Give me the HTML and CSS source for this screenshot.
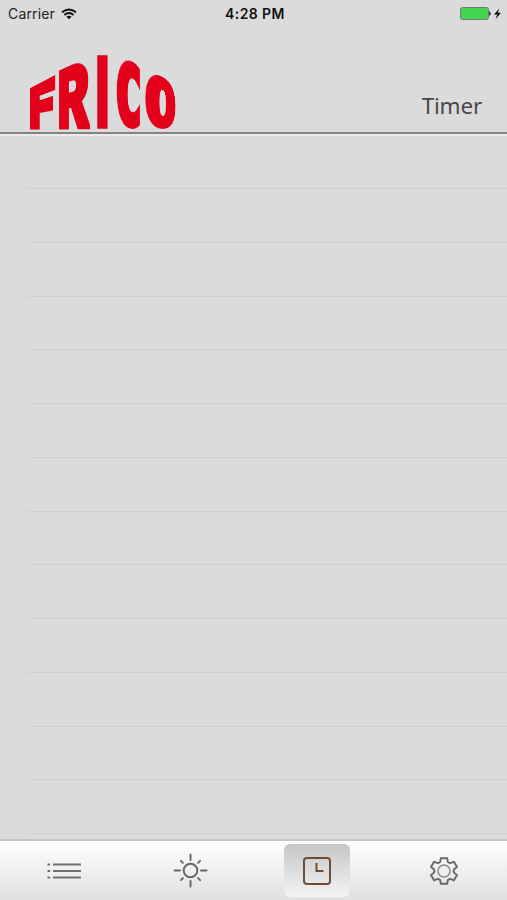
FILE: index.html
```html
<!DOCTYPE html>
<html lang="en">
<head>
  <meta charset="utf-8">
  <title>Timer</title>
  <link rel="stylesheet" href="styles.css">
</head>
<body>
  <div class="status">
    <div class="carrier">
      <span>Carrier</span>
      <svg width="16" height="12" viewBox="0 0 16 12" fill="none" stroke="#111" stroke-width="1.9">
        <path d="M1 4.3Q8-1.4 15 4.3M3.4 7Q8 3.2 12.6 7"/>
        <path d="M5.4 8.7Q8 6.7 10.6 8.7L8 11.3z" fill="#111" stroke="none"/>
      </svg>
    </div>
    <div class="clock">4:28 PM</div>
    <div class="power">
      <svg width="42" height="14" viewBox="0 0 42 14">
        <rect x=".5" y=".5" width="28" height="12" rx="2" fill="#43d651" stroke="#777"/>
        <path d="M29.5 4.5q2 2 0 4z" fill="#222" stroke="#222" stroke-width=".6"/>
        <path d="M39.3 1.5L34 7.5h3.2L35.7 12 41 5.8h-3.2z" fill="#111"/>
      </svg>
    </div>
  </div>

  <header class="header">
    <div class="logo">
      <span class="letter f">F</span>
      <span class="letter r">R</span>
      <span class="letter i">I</span>
      <span class="letter c">C</span>
      <span class="letter o">O</span>
    </div>
    <h1 class="title">Timer</h1>
  </header>

  <main class="list">
    <div class="row first"></div>
    <div class="row"></div>
    <div class="row"></div>
    <div class="row"></div>
    <div class="row"></div>
    <div class="row"></div>
    <div class="row"></div>
    <div class="row"></div>
    <div class="row"></div>
    <div class="row"></div>
    <div class="row"></div>
    <div class="row"></div>
    <div class="row"></div>
  </main>

  <nav class="tabs">
    <a class="tab">
      <svg width="36" height="20" viewBox="0 0 36 20" stroke="#707070" stroke-width="2">
        <path d="M2.5 3.5h2.6M2.5 10h2.6M2.5 16.5h2.6M8 3.5h28M8 10h28M8 16.5h28"/>
      </svg>
    </a>
    <a class="tab">
      <svg width="36" height="36" viewBox="-18.5 -17.5 36 36" fill="none" stroke="#686868" stroke-width="2" stroke-linecap="round">
        <circle r="6.8"/>
        <path d="M0-10.5V-16M0 10.5V16M-10.5 0H-16M10.5 0H16M7.6-7.6l2-2M-7.6-7.6l-2-2M7.6 7.6l2 2M-7.6 7.6l-2 2"/>
      </svg>
    </a>
    <a class="tab active">
      <svg width="28" height="28" viewBox="0 0 28 28" fill="none" stroke="#704c35" stroke-width="2">
        <rect x="1" y="1" width="26" height="26" rx="3"/>
        <path d="M13.5 6V14h7"/>
      </svg>
    </a>
    <a class="tab">
      <svg width="30" height="30" viewBox="-15 -15 30 30" fill="none" stroke="#686868" stroke-width="1.9" stroke-linejoin="round">
        <path d="M-3.2-12.8h6.4l.5 3.5q1.4 1.9 3.4 1.1l2.9-1.1 3 5.3-2.6 2q-1.7 2 0 4l2.6 2-3 5.300-2.900-1.100q-2-.8-3.400 1.100l-.5 3.500h-6.400l-.5-3.500q-1.400-1.900-3.400-1.100l-2.900 1.100-3-5.300 2.600-2q1.700-2 0-4l-2.600-2 3-5.300 2.900 1.100q2 .8 3.400-1.100z"/>
        <circle r="6" stroke="#888" stroke-width="1.5"/>
      </svg>
    </a>
  </nav>
</body>
</html>
```

FILE: styles.css
```css
* {
  box-sizing: border-box;
}

body {
  margin: 0;
  height: 900px;
  overflow: hidden;
  display: flex;
  flex-direction: column;
  background-color: #dbdbdb;
  font-family: Inter, sans-serif;
}

.status {
  height: 28px;
  display: grid;
  grid-template-columns: 1fr 1fr 1fr;
  align-items: center;
  padding: 0 5px 1px 8px;
  font-size: 14px;
  color: #222;
}

.carrier {
  display: flex;
  align-items: center;
  gap: 6px;
  letter-spacing: 0.15px;
}

.clock {
  text-align: center;
  font-weight: 600;
  letter-spacing: 0.4px;
  color: #111;
}

.power {
  display: flex;
  justify-content: flex-end;
}

.header {
  height: 108px;
  display: flex;
  justify-content: space-between;
  align-items: flex-end;
  padding: 0 25px 3px 30px;
  border-bottom: 2px solid #ebebeb;
  box-shadow: inset 0 -2px #858282;
}

/* the letters taper towards the bottom line, so the tops form a roof */
.logo {
  display: flex;
  height: 80px;
  margin-bottom: 2px;
}

.letter {
  display: block;
  flex: none;
  height: 80px;
  white-space: nowrap;
  font: bold 100px/84px Roboto, sans-serif;
  color: #e2001a;
  -webkit-text-stroke: 8px #e2001a;
  transform-origin: 0 100%;
}

.f {
  width: 29px;
  text-indent: 0;
  -webkit-text-stroke-width: 11px;
  line-height: 81px;
  transform: matrix3d(0.325, 0, 0, -0.0042, 0, 0.5, 0, 0, 0, 0, 1, 0, 0, 0, 0, 1);
}

.r {
  width: 37.5px;
  text-indent: -2px;
  transform: matrix3d(0.392, 0, 0, -0.003, 0, 0.74, 0, 0, 0, 0, 1, 0, 0, 0, 0, 1);
}

.i {
  width: 18.5px;
  text-indent: -3px;
  transform: matrix3d(0.456, 0, 0, 0, 0, 0.925, 0, 0, 0, 0, 1, 0, 0, 0, 0, 1);
}

/* narrow square shapes for the round letters */
.c,
.o {
  font-family: "DejaVu Sans Mono", monospace;
  line-height: 81px;
}

.c {
  width: 29.5px;
  transform: matrix3d(0.526, 0, 0, 0.0036, 0, 0.91, 0, 0, 0, 0, 1, 0, 0, 0, 0, 1);
}

.o {
  width: 31px;
  transform: matrix3d(0.707, 0, 0, 0.0065, 0, 0.74, 0, 0, 0, 0, 1, 0, 0, 0, 0, 1);
}

.title {
  margin: 0 0 10px;
  font: 400 22.5px/30px "Noto Sans", sans-serif;
  letter-spacing: -0.2px;
  color: #484848;
}

.list {
  flex: 1;
  overflow: hidden;
}

.row {
  height: 53.75px;
  margin-left: 28px;
  border-bottom: 1px solid #d0d0d0;
}

.first {
  height: 53px;
  margin-left: 25px;
}

.tabs {
  height: 61px;
  display: grid;
  grid-template-columns: repeat(4, 1fr);
  justify-items: center;
  border-top: 2px solid #c6c6c6;
  background: linear-gradient(#fff, #e0e0e0);
}

.tab {
  width: 66px;
  height: 53px;
  margin-top: 3px;
  display: flex;
  align-items: center;
  justify-content: center;
  border-radius: 6px;
}

.active {
  background: linear-gradient(#c6c6c6, #f4f4f4);
}
```
